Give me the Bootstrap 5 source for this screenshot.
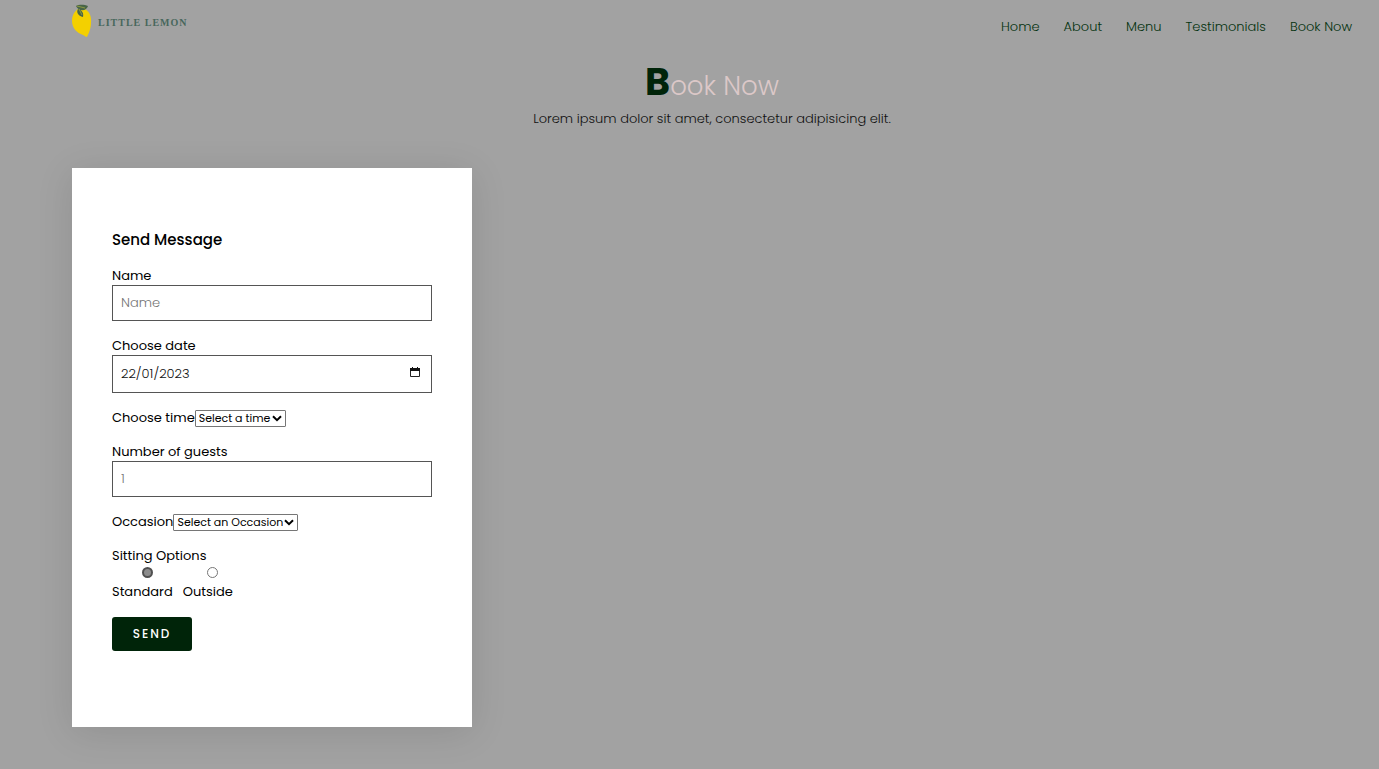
<!DOCTYPE html>
<html lang="en-GB">
<head>
<meta charset="utf-8">
<meta name="viewport" content="width=device-width, initial-scale=1">
<title>Little Lemon - Book Now</title>
<link href="https://cdn.jsdelivr.net/npm/bootstrap@5.3.0/dist/css/bootstrap.min.css" rel="stylesheet">
<style>
body{background:#a2a2a2;color:#000;font-family:Poppins,Inter,"Open Sans",sans-serif;font-size:13px;line-height:18px;min-height:100vh}
.page-pad{padding-left:72px;padding-right:27px}
.site-nav{height:62px}
.brand-text{font-family:"Liberation Serif",serif;font-weight:700;font-size:10px;letter-spacing:1px;fill:#48675c}
.site-nav .nav-link{color:#04320f;font-weight:300;line-height:22px;white-space:nowrap}
.heading{font-size:26px;line-height:48px;font-weight:300;color:#dcc8c8}
.heading span{font-size:38px;line-height:38px;font-weight:700;color:#002409}
.lede{font-weight:300;color:#111;margin-bottom:40px}
.booking{width:400px;max-width:100%;padding:60px 40px 76px;box-shadow:0 5px 35px rgba(0,0,0,.11)}
.booking h2{font-size:15px;line-height:23px;font-weight:500}
.booking label,.booking legend{font-size:13px;line-height:18px;float:none}
.box{height:36px;border:1px solid #555;border-radius:0;padding:0 8px;font-size:13px;font-weight:300;color:#111;background:#fff}
.box::placeholder{color:#757575;opacity:1}
.box-date{height:38px}
.cal-btn{right:11px;top:11px;width:12px;height:12px}
.pick{appearance:none;font-family:inherit;font-size:11px;line-height:15px;height:17px;padding:0 14px 0 3px;border:1px solid #767676;border-radius:1px;color:#000;background:#fff url("data:image/svg+xml,%3Csvg xmlns='http://www.w3.org/2000/svg' width='10' height='7' viewBox='0 0 10 7'%3E%3Cpath d='M1 1.2l4 4 4-4' fill='none' stroke='black' stroke-width='2'/%3E%3C/svg%3E") no-repeat right 3px center}
.choices{gap:10px}
.dot{appearance:none;width:11px;height:11px;margin:2px 0 5px 10px;border:1px solid #767676;border-radius:50%;background:#fff}
.dot:checked{background:#8c8c8c;border:2px solid #505050}
.send{width:80px;height:34px;padding:0;background:#002409;color:#fff;border-radius:3px;font-size:12px;font-weight:500;letter-spacing:2px}
.send:hover{background:#0d3a18;color:#fff}
</style>
</head>
<body>
<header>
<nav class="site-nav page-pad d-flex justify-content-between align-items-start">
<a href="#" class="d-block" aria-label="Little Lemon">
<svg width="130" height="42" viewBox="0 0 130 42" class="d-block">
<path d="M8 8C3 10 0 15 0 21C0 28 5 33 11 35C13 36 14 37 15 37C16 35 19 29 19 23C20 15 16 8 8 8Z" fill="#f4d000"/>
<path d="M4 6C8 4 13 5 16 6C15 9 12 11 9 10C7 10 5 8 4 6ZM6 9C4 12 6 16 11 17C12 13 10 10 6 9Z" fill="#486548"/>
<path d="M5 6L13 8M7 9L10 15" stroke="#8b9842" fill="none"/>
<text x="26" y="26" class="brand-text">LITTLE LEMON</text>
</svg></a>
<ul class="nav gap-4 pt-3 flex-nowrap">
<li><a class="nav-link p-0" href="#">Home</a></li>
<li><a class="nav-link p-0" href="#">About</a></li>
<li><a class="nav-link p-0" href="#">Menu</a></li>
<li><a class="nav-link p-0" href="#">Testimonials</a></li>
<li><a class="nav-link p-0" href="#">Book Now</a></li>
</ul>
</nav>
</header>
<main class="page-pad pb-4">
<div class="text-center">
<h1 class="heading mb-0"><span>B</span>ook Now</h1>
<p class="lede">Lorem ipsum dolor sit amet, consectetur adipisicing elit.</p>
</div>
<form class="booking bg-white">
<h2 class="mb-3">Send Message</h2>
<div class="mb-3">
<label for="name" class="d-block">Name</label>
<input id="name" type="text" class="box w-100 d-block" placeholder="Name">
</div>
<div class="mb-3">
<label for="date" class="d-block">Choose date</label>
<div class="position-relative">
<input id="date" type="text" inputmode="numeric" class="box box-date w-100 d-block" value="22/01/2023">
<button type="button" class="cal-btn position-absolute border-0 bg-transparent p-0 d-flex" aria-label="Open calendar">
<svg width="12" height="12" viewBox="0 0 12 12"><path d="M1.5 2.5h9v8h-9z" fill="none" stroke="#222"/><path d="M1 2h10v3H1zM3 1h1v1H3zM8 1h1v1H8z" fill="#111"/></svg>
</button>
</div>
</div>
<div class="d-flex align-items-center mb-3">
<label for="time">Choose time</label>
<select id="time" class="pick"><option>Select a time</option><option>17:00</option><option>18:00</option></select>
</div>
<div class="mb-3">
<label for="guests" class="d-block">Number of guests</label>
<input id="guests" type="number" class="box w-100 d-block" placeholder="1" min="1">
</div>
<div class="d-flex align-items-center mb-3">
<label for="occasion">Occasion</label>
<select id="occasion" class="pick"><option>Select an Occasion</option><option>Birthday</option><option>Anniversary</option></select>
</div>
<fieldset class="mb-3">
<legend class="mb-0">Sitting Options</legend>
<div class="d-flex choices">
<div class="d-flex flex-column align-items-center"><input class="dot" type="radio" name="seat" id="standard" checked><label for="standard">Standard</label></div>
<div class="d-flex flex-column align-items-center"><input class="dot" type="radio" name="seat" id="outside"><label for="outside">Outside</label></div>
</div>
</fieldset>
<button type="submit" class="btn send border-0">SEND</button>
</form>
</main>
<script src="https://cdn.jsdelivr.net/npm/bootstrap@5.3.0/dist/js/bootstrap.bundle.min.js"></script>
</body>
</html>
